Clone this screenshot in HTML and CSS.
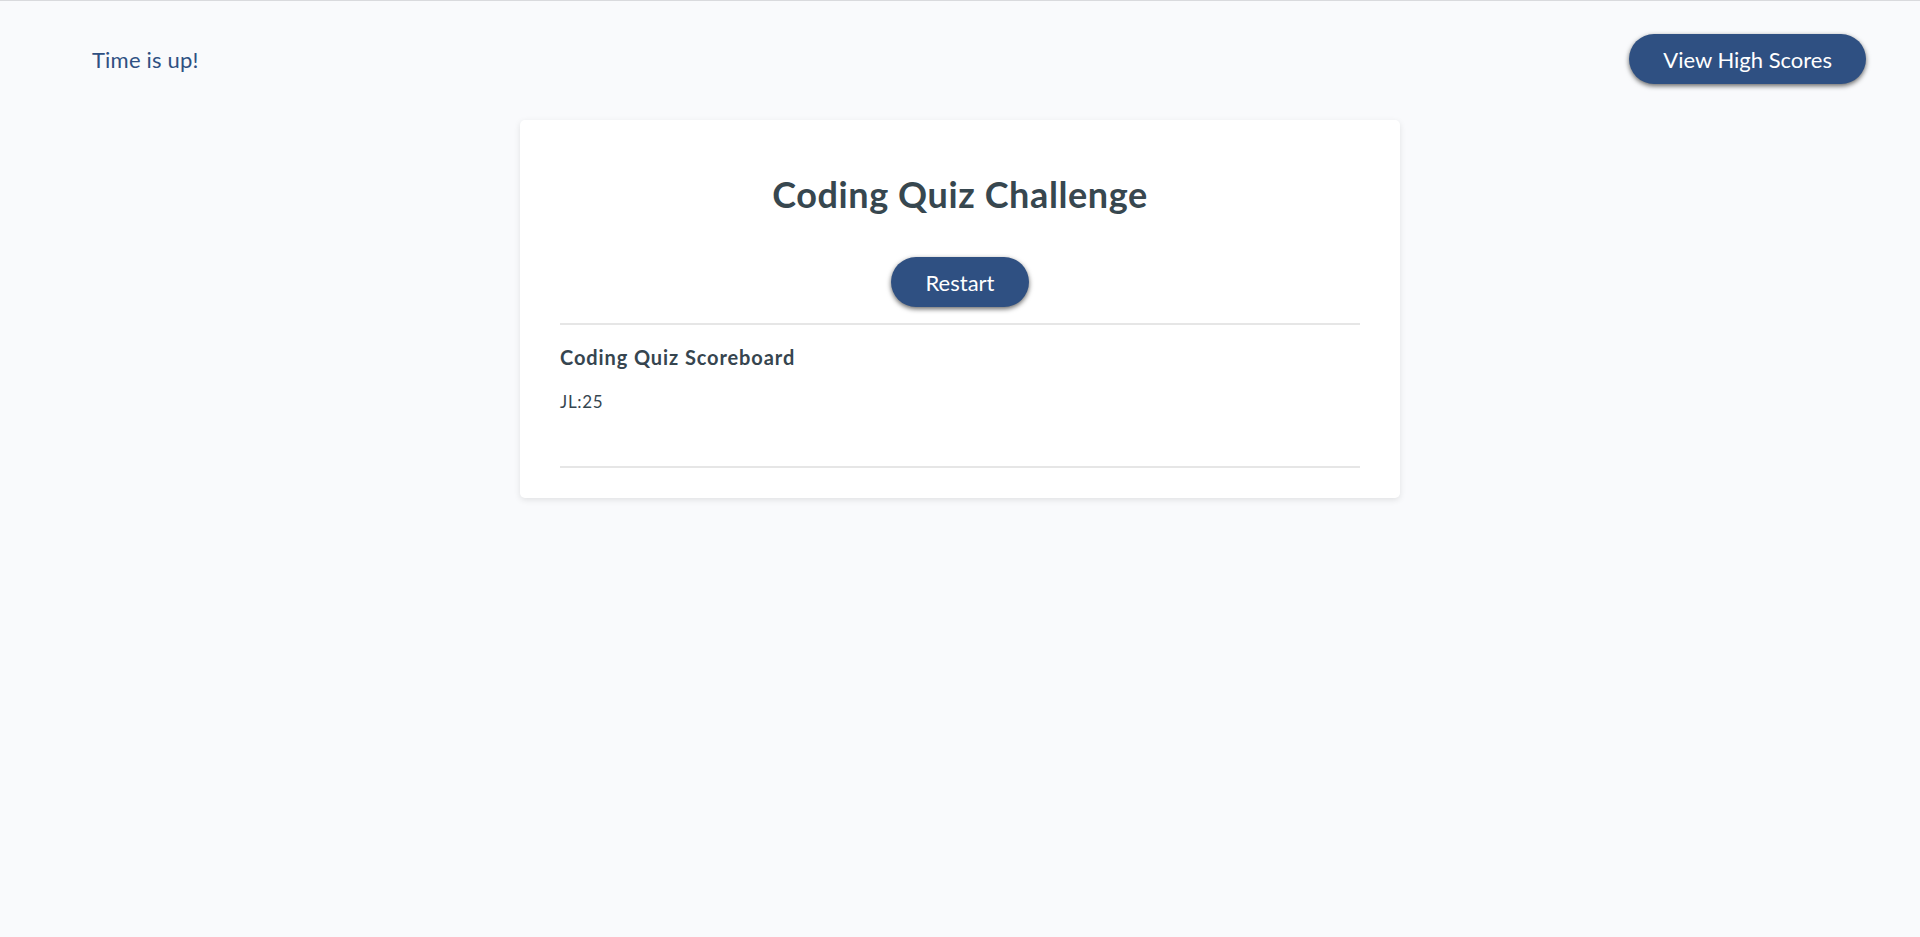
FILE: index.html
```html
<!DOCTYPE html>
<html lang="en">
<head>
<meta charset="utf-8">
<title>Coding Quiz Challenge</title>
<link rel="stylesheet" href="styles.css">
</head>
<body>
<header class="topbar">
  <p class="timer">Time is up!</p>
  <button class="btn">View High Scores</button>
</header>
<main class="card">
  <h1 class="title">Coding Quiz Challenge</h1>
  <div class="actions">
    <button class="btn btn-restart">Restart</button>
  </div>
  <hr class="rule">
  <h2 class="board-title">Coding Quiz Scoreboard</h2>
  <p class="score">JL:25</p>
  <hr class="rule rule-bottom">
</main>
</body>
</html>
```
FILE: styles.css
```css
html, body {
  margin: 0;
  padding: 0;
}
body {
  background: #f9fafc;
  border-top: 1px solid #d9dadd;
  font-family: Lato, "Open Sans", sans-serif;
  color: #36454f;
  min-height: 936px;
}
.topbar {
  display: flex;
  justify-content: space-between;
  align-items: center;
  padding: 33px 54px 0 92px;
}
.timer {
  margin: 0;
  font-size: 22px;
  letter-spacing: 0.2px;
  color: #2f5082;
}
.btn {
  height: 50px;
  padding: 0 34px;
  border: none;
  border-radius: 25px;
  background: #2f5082;
  color: #ffffff;
  font-family: Lato, "Open Sans", sans-serif;
  font-size: 22px;
  box-shadow: 0 2px 5px rgba(0, 0, 0, 0.6);
  cursor: pointer;
}
.btn-restart {
  padding: 0 35px;
}
.card {
  width: 800px;
  margin: 36px auto 0;
  padding: 52px 40px 30px;
  background: #ffffff;
  border-radius: 5px;
  box-shadow: 0 2px 6px rgba(0, 0, 0, 0.1);
}
.title {
  margin: 0;
  font-size: 36px;
  line-height: 44px;
  font-weight: 700;
  letter-spacing: 0.6px;
  text-align: center;
  color: #37474f;
}
.actions {
  display: flex;
  justify-content: center;
  margin-top: 41px;
}
.rule {
  margin: 16px 0 0;
  border: none;
  height: 2px;
  background: #e6e6e6;
}
.board-title {
  margin: 20px 0 0;
  font-size: 20px;
  line-height: 24px;
  font-weight: 700;
  letter-spacing: 0.9px;
  color: #36454f;
}
.score {
  margin: 23px 0 0;
  font-size: 17px;
  line-height: 20px;
  letter-spacing: 0.7px;
  color: #36454f;
}
.rule-bottom {
  margin-top: 54px;
}
```
